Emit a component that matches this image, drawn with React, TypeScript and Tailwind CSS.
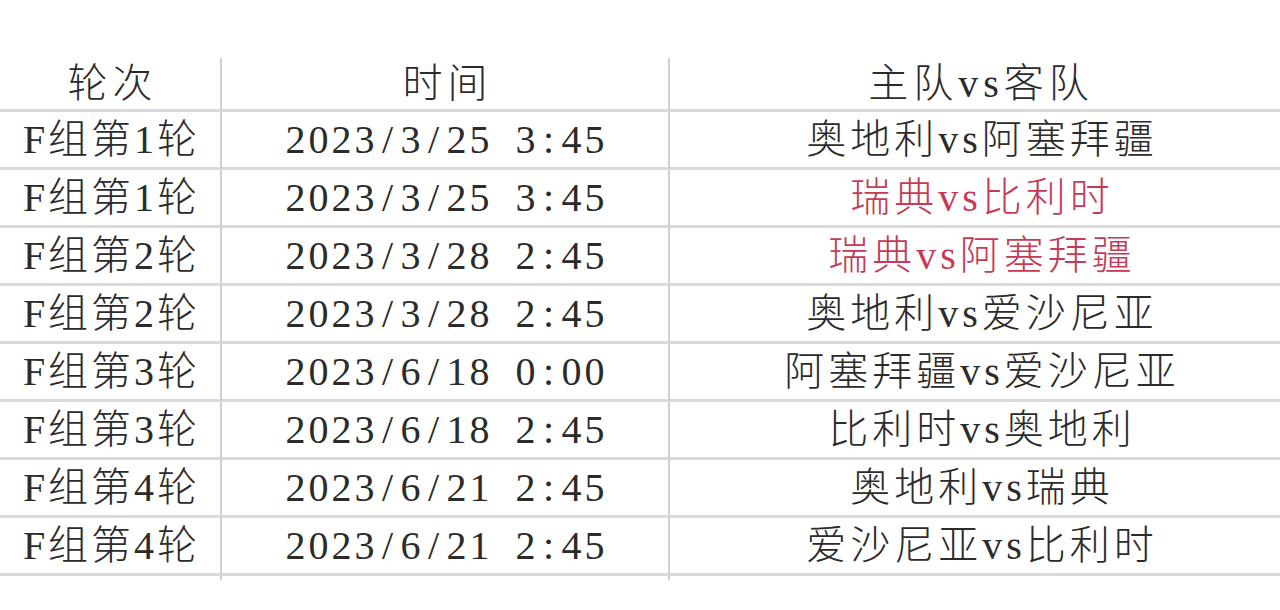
import React from "react";

type Row = { round: string; time: string; match: string; red?: boolean };

const rows: Row[] = [
  { round: "F组第1轮", time: "2023/3/25 3:45", match: "奥地利vs阿塞拜疆" },
  { round: "F组第1轮", time: "2023/3/25 3:45", match: "瑞典vs比利时", red: true },
  { round: "F组第2轮", time: "2023/3/28 2:45", match: "瑞典vs阿塞拜疆", red: true },
  { round: "F组第2轮", time: "2023/3/28 2:45", match: "奥地利vs爱沙尼亚" },
  { round: "F组第3轮", time: "2023/6/18 0:00", match: "阿塞拜疆vs爱沙尼亚" },
  { round: "F组第3轮", time: "2023/6/18 2:45", match: "比利时vs奥地利" },
  { round: "F组第4轮", time: "2023/6/21 2:45", match: "奥地利vs瑞典" },
  { round: "F组第4轮", time: "2023/6/21 2:45", match: "爱沙尼亚vs比利时" },
];

const font = "font-['Liberation_Serif','Noto_Sans_CJK_SC',serif]";

function MonoText({ text }: { text: string }) {
  return (
    <span className="flex">
      {text.split("").map((c, i) => (
        <span key={i} className="inline-block w-[23px] text-center">
          {c === " " ? "\u00a0" : c}
        </span>
      ))}
    </span>
  );
}

export default function App() {
  return (
    <div className={`w-[1280px] h-[610px] bg-white overflow-hidden ${font} font-light text-[#2b2b2b]`}>
      <div className="h-[58px]" />
      <div className="grid grid-cols-[222px_448px_1fr]">
        {/* header */}
        <div className="h-[54px] flex items-center justify-center border-r-2 border-b-[3px] border-r-[#cfcfcf] border-b-[#d9d9d9] text-[40px] leading-none tracking-[5px] pl-[5px]">
          轮次
        </div>
        <div className="h-[54px] flex items-center justify-center border-r-2 border-b-[3px] border-r-[#cfcfcf] border-b-[#d9d9d9] text-[40px] leading-none tracking-[5px] pl-[5px]">
          时间
        </div>
        <div className="h-[54px] flex items-center justify-center border-b-[3px] border-b-[#d9d9d9] text-[40px] leading-none tracking-[5px] pl-[12px]">
          主队vs客队
        </div>
        {rows.map((r, i) => (
          <React.Fragment key={i}>
            <div className="h-[58px] flex items-center justify-center border-r-2 border-b-[3px] border-r-[#cfcfcf] border-b-[#d9d9d9] text-[40px] leading-none tracking-[3px] pl-[3px]">
              {r.round}
            </div>
            <div className="h-[58px] flex items-center justify-center border-r-2 border-b-[3px] border-r-[#cfcfcf] border-b-[#d9d9d9] text-[40px] leading-none">
              <MonoText text={r.time} />
            </div>
            <div
              className={`h-[58px] flex items-center justify-center border-b-[3px] border-b-[#d9d9d9] text-[40px] leading-none tracking-[4px] pl-[14px] ${
                r.red ? "text-[#c63a55]" : ""
              }`}
            >
              {r.match}
            </div>
          </React.Fragment>
        ))}
        <div className="h-[4px] border-r-2 border-r-[#cfcfcf]" />
        <div className="h-[4px] border-r-2 border-r-[#cfcfcf]" />
        <div className="h-[4px]" />
      </div>
    </div>
  );
}
